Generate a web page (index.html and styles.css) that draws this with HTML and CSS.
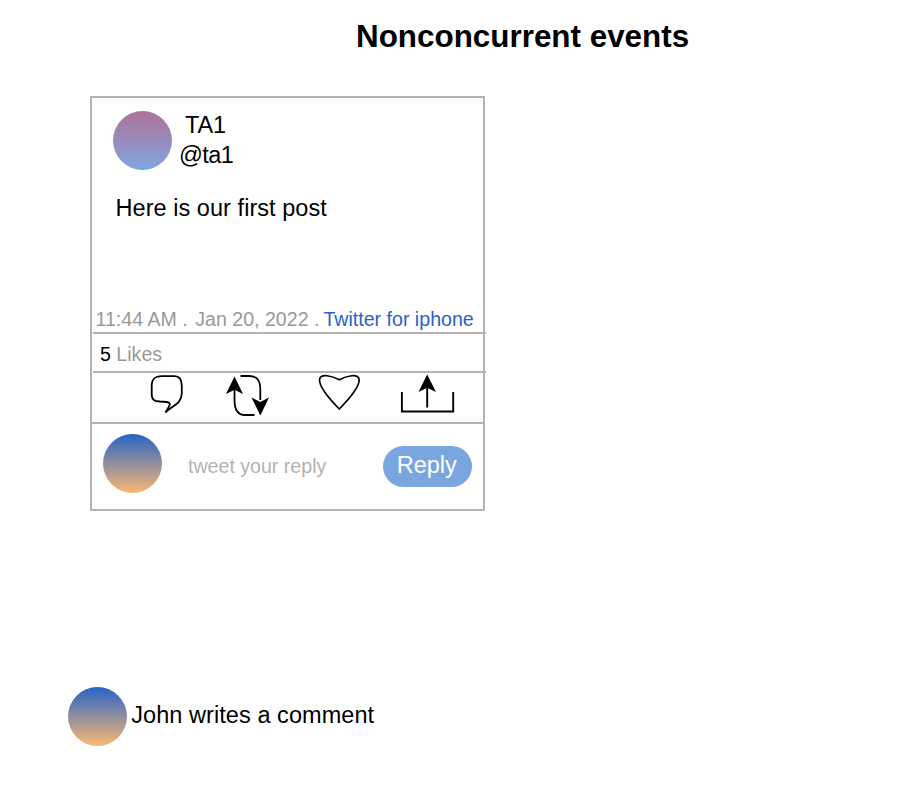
FILE: index.html
```html
<!DOCTYPE html>
<html lang="en">
<head>
<meta charset="utf-8">
<title>Nonconcurrent events</title>
<link rel="stylesheet" href="styles.css">
</head>
<body>
<h1 class="title">Nonconcurrent events</h1>
<article class="card">
  <section class="post">
    <header class="author">
      <div class="avatar avatar-rose"></div>
      <div class="names">
        <div class="name">TA1</div>
        <div class="handle">@ta1</div>
      </div>
    </header>
    <p class="message">Here is our first post</p>
    <p class="meta"><span class="time">11:44 AM .</span><span class="date">Jan 20, 2022 .</span><a class="source">Twitter for iphone</a></p>
  </section>
  <section class="likes"><span class="count">5</span> Likes</section>
  <section class="actions">
    <svg width="392" height="49" viewBox="93 373 392 49" fill="none" stroke="#000" stroke-width="2">
      <path d="M151.700 386C151.700 378.500 155 376.100 162 376.100H174.500C179.500 376.100 181.800 380 181.800 386V393C181.800 404 173 405 165.500 412.500C168 408 170 406 169.800 404C169.500 401.700 166 401.500 160 401.500C154.500 401.300 151.700 400 151.700 394Z" stroke-width="1.800"/>
      <path d="M234.500 386V400C234.500 410.500 238 415 245 415H254.500M240.500 376H249C257 376 260.300 380 260.300 389V400" stroke-width="1.800"/>
      <path d="M234.500 376.500L243 394L234.500 389.700L226 394ZM260.300 415.500L269 397.500L260.300 402L251.500 397.500Z" fill="#000" stroke="none"/>
      <path d="M339.300 409C326 395.500 319.500 386 319.500 380C319.500 372.500 333 376.300 339.300 379.800C345.500 376.300 359.200 372.500 359.200 380C359.200 386 352.500 395.500 339.300 409Z" stroke-width="1.700"/>
      <path d="M401.900 392V411.500H453.200V392M427.200 407.500V386" stroke-width="1.900"/>
      <path d="M427.200 374.500L436 392L427.200 387.700L418.500 392Z" fill="#000" stroke="none"/>
    </svg>
  </section>
  <section class="reply">
    <div class="avatar avatar-dusk"></div>
    <span class="prompt">tweet your reply</span>
    <button class="send" type="button">Reply</button>
  </section>
</article>
<div class="note">
  <div class="avatar avatar-dusk"></div>
  <span class="note-text">John writes a comment</span>
</div>
</body>
</html>
```
FILE: styles.css
```css
* { box-sizing: border-box; }
body {
  margin: 0;
  padding: 16px 0 0;
  width: 912px;
  height: 800px;
  overflow: hidden;
  background: #fff;
  color: #000;
  font: 23.5px/30px "Liberation Sans", Arial, Helvetica, sans-serif;
}
p, h1 { margin: 0; white-space: nowrap; }
.title {
  margin-left: 356px;
  height: 80px;
  font-size: 31.4px;
  line-height: 42px;
}
.card {
  display: flex;
  flex-direction: column;
  margin-left: 90px;
  width: 395px;
  height: 414.500px;
  border: 2px solid #b3b3b3;
}
.avatar {
  flex: none;
  width: 59px;
  height: 59px;
  border-radius: 50%;
}
.avatar-rose { background: linear-gradient(#ad7399, #81a6e0); }
.avatar-dusk { background: linear-gradient(#2763c7, #fab873); }
.post {
  display: flex;
  flex-direction: column;
  height: 234px;
  padding: 12px 0 1px;
}
.author { display: flex; padding-left: 20.500px; height: 83px; }
.author .avatar { margin-top: 0.800px; }
.names { margin-left: 7.500px; }
.name { padding-left: 6px; letter-spacing: -0.200px; }
.handle { letter-spacing: -0.600px; }
.message { padding-left: 23.500px; letter-spacing: 0.050px; }
.meta {
  display: flex;
  margin-top: auto;
  padding-left: 3.500px;
  color: #999;
  font-size: 19.6px;
  line-height: 24px;
}
.date { margin-left: 7.500px; }
.source { margin-left: 4px; color: #2763c7; }
.likes, .actions {
  margin: 0 -3px 0 1px;
  border-top: 2px solid #b3b3b3;
}
.likes {
  height: 39px;
  padding: 2px 0 0 7px;
  color: #999;
  font-size: 19.6px;
  line-height: 37px;
}
.count { color: #000; }
.actions { height: 51px; }
.actions svg { display: block; }
.reply {
  display: flex;
  height: 86.500px;
  padding-left: 11px;
  border-top: 2px solid #b3b3b3;
}
.reply .avatar { margin-top: 10px; }
.prompt {
  margin: 27px 0 0 26px;
  width: 195px;
  color: #b3b3b3;
  font-size: 19.6px;
}
.send {
  margin-top: 22px;
  width: 88.500px;
  height: 41px;
  padding: 0 1px 3px 0;
  border: 0;
  border-radius: 21px;
  background: #7aa6e0;
  color: #fff;
  font: inherit;
}
.note {
  display: flex;
  align-items: center;
  gap: 4px;
  margin: 176px 0 0 68.300px;
}
.note-text { padding-bottom: 2px; letter-spacing: 0.060px; }
```
